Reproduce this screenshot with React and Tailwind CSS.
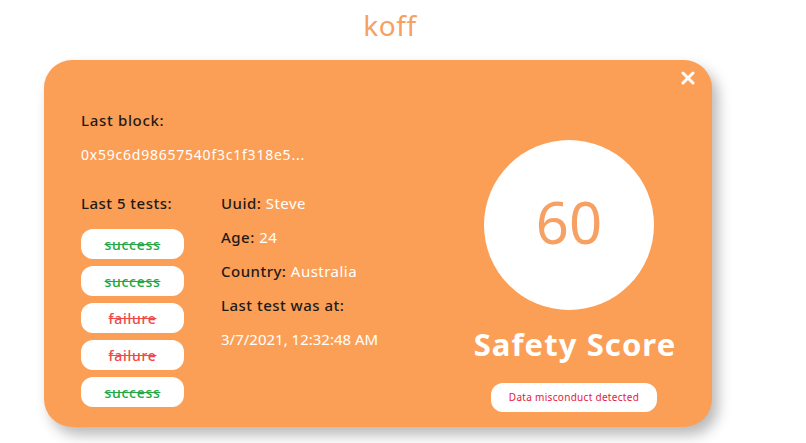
import React from "react";

const tests = ["success", "success", "failure", "failure", "success"];

export default function App() {
  return (
    <div
      className="w-[806px] h-[443px] bg-white overflow-hidden"
      style={{ fontFamily: '"Noto Sans", "DejaVu Sans", sans-serif' }}
    >
      <div className="h-[60px] pt-[6px] flex justify-center">
        <div className="text-[28px] leading-[38px] text-[#f7a063] ml-[-26px] tracking-[0.02em]">koff</div>
      </div>
      <div className="relative ml-[44px] w-[668px] h-[367px] rounded-[28px] bg-[#fb9f57] shadow-[6px_8px_14px_rgba(0,0,0,0.28)] flex tracking-[0.03em]">
        <button className="absolute left-[634px] top-[8px] w-[20px] h-[20px] flex items-center justify-center text-white">
          <svg width="14" height="14" viewBox="0 0 14 14">
            <path d="M2 2 L12 12 M12 2 L2 12" stroke="white" strokeWidth="3" strokeLinecap="round" />
          </svg>
        </button>
        <div className="w-[400px] pl-[37px] pt-[50px]">
          <p className="text-[15px] leading-[20px] font-medium text-[#1f1a17] tracking-[0.045em]">Last block:</p>
          <p className="mt-[15px] text-[14px] leading-[20px] text-white tracking-[0.055em]">0x59c6d98657540f3c1f318e5...</p>
          <div className="mt-[28px] flex">
            <div className="w-[140px]">
              <p className="text-[15px] leading-[20px] font-medium text-[#1f1a17]">Last 5 tests:</p>
              <div className="mt-[16px] flex flex-col gap-[7px]">
                {tests.map((t, i) => (
                  <div
                    key={i}
                    className={`w-[103px] h-[30px] rounded-[12px] bg-white flex items-center justify-center text-[14px] font-medium line-through tracking-[0.05em] ${
                      t === "success" ? "text-[#23a845]" : "text-[#f24848]"
                    }`}
                  >
                    {t}
                  </div>
                ))}
              </div>
            </div>
            <div className="flex flex-col gap-[14px] text-[15px] leading-[20px] font-medium text-[#1f1a17]">
              <p>
                Uuid: <span className="text-white font-normal">Steve</span>
              </p>
              <p>
                Age: <span className="text-white font-normal">24</span>
              </p>
              <p>
                Country: <span className="text-white font-normal">Australia</span>
              </p>
              <p>Last test was at:</p>
              <p className="text-white font-normal text-[15px] tracking-normal">3/7/2021, 12:32:48 AM</p>
            </div>
          </div>
        </div>
        <div className="w-[260px] flex flex-col items-center pt-[80px]">
          <div className="w-[170px] h-[170px] rounded-full bg-white flex items-center justify-center mr-[10px]">
            <span className="text-[58px] leading-none text-[#f7a063] tracking-normal mt-[-6px]">60</span>
          </div>
          <div className="mt-[14px] text-[31px] leading-[40px] font-bold text-white tracking-[0.035em] ml-[2px]">Safety Score</div>
          <div className="mt-[19px] w-[166px] h-[29px] rounded-[12px] bg-white flex items-center justify-center text-[10px] text-[#e8163e] tracking-[0.03em]">
            Data misconduct detected
          </div>
        </div>
      </div>
    </div>
  );
}
